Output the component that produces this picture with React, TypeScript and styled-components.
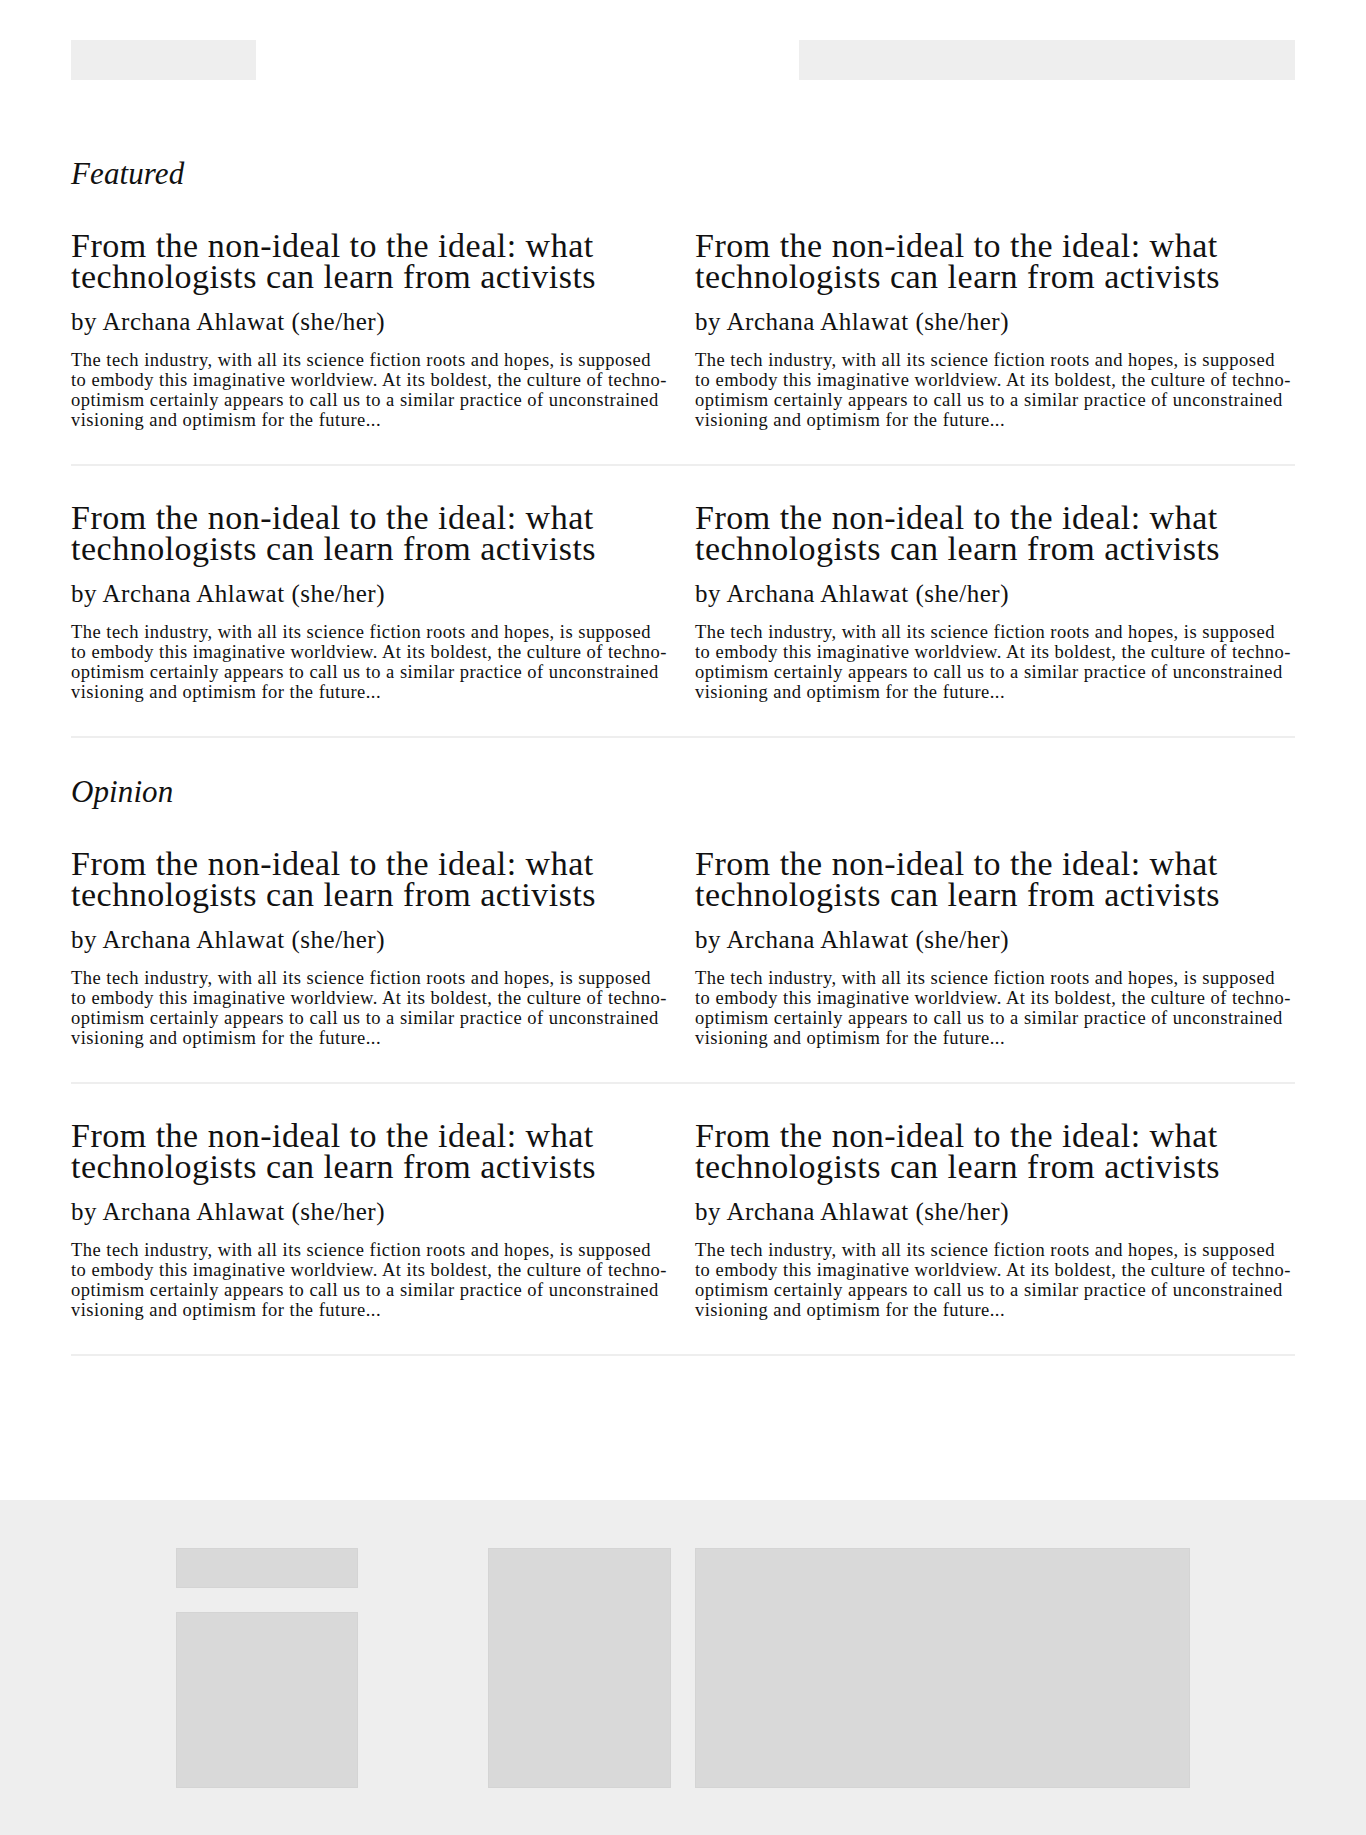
import React from "react";
import styled, { createGlobalStyle } from "styled-components";

const GlobalStyle = createGlobalStyle`
  html, body {
    margin: 0;
    padding: 0;
    background: #ffffff;
  }
  body {
    font-family: "Liberation Serif", "Times New Roman", serif;
    color: #111111;
    -webkit-font-smoothing: antialiased;
  }
  * { box-sizing: border-box; }
`;

const Page = styled.div`
  min-height: 1835px;
  display: flex;
  flex-direction: column;
`;

const Container = styled.div`
  width: 1224px;
  margin: 0 0 0 71px;
`;

const Header = styled.header`
  display: flex;
  justify-content: space-between;
  align-items: center;
  padding-top: 40px;
  height: 80px;
`;

const Placeholder = styled.div<{ $w: number; $h: number }>`
  width: ${(p) => p.$w}px;
  height: ${(p) => p.$h}px;
  background: #eeeeee;
`;

const Main = styled.main`
  padding-top: 40px;
  padding-bottom: 144px;
`;

const Section = styled.section``;

const SectionTitle = styled.h2`
  margin: 0;
  padding-top: 36px;
  font-style: italic;
  font-weight: 400;
  font-size: 31px;
  line-height: 36px;
  letter-spacing: 0.1px;
`;

const Row = styled.div<{ $first?: boolean }>`
  display: grid;
  grid-template-columns: 600px 600px;
  column-gap: 24px;
  padding-top: ${(p) => (p.$first ? "38px" : "36px")};
  padding-bottom: 34px;
  border-bottom: 2px solid #eeeeee;
`;

const Article = styled.article`
  display: flex;
  flex-direction: column;
`;

const Title = styled.h3`
  margin: 0;
  font-weight: 400;
  font-size: 34px;
  line-height: 31px;
  letter-spacing: 0.5px;
`;

const Byline = styled.p`
  margin: 16px 0 0;
  font-size: 25px;
  line-height: 28px;
  letter-spacing: 0.53px;
`;

const Excerpt = styled.p`
  margin: 14px 0 0;
  font-size: 18.5px;
  line-height: 20px;
  letter-spacing: 0.48px;
  white-space: pre;
`;

const Footer = styled.footer`
  background: #eeeeee;
  padding: 48px 0 47px;
`;

const FooterGrid = styled.div`
  display: grid;
  grid-template-columns: 600px 600px;
  column-gap: 24px;
`;

const FooterLeft = styled.div`
  display: flex;
  justify-content: space-between;
  padding-left: 105px;
`;

const FooterStack = styled.div`
  display: flex;
  flex-direction: column;
  gap: 24px;
`;

const Block = styled.div<{ $w: number; $h: number }>`
  width: ${(p) => p.$w}px;
  height: ${(p) => p.$h}px;
  background: #d9d9d9;
  border: 1px solid #d4d4d4;
`;

const excerpt =
  "The tech industry, with all its science fiction roots and hopes, is supposed\n" +
  "to embody this imaginative worldview. At its boldest, the culture of techno-\n" +
  "optimism certainly appears to call us to a similar practice of unconstrained\n" +
  "visioning and optimism for the future...";

type Post = { title: string; author: string; excerpt: string };

const post: Post = {
  title: "From the non-ideal to the ideal: what technologists can learn from activists",
  author: "by Archana Ahlawat (she/her)",
  excerpt,
};

const sections = [
  { name: "Featured", rows: [[post, post], [post, post]] },
  { name: "Opinion", rows: [[post, post], [post, post]] },
];

function ArticleCard({ p }: { p: Post }) {
  return (
    <Article>
      <Title>{p.title}</Title>
      <Byline>{p.author}</Byline>
      <Excerpt>{p.excerpt}</Excerpt>
    </Article>
  );
}

export default function App() {
  return (
    <Page>
      <GlobalStyle />
      <Container>
        <Header>
          <Placeholder $w={185} $h={40} />
          <Placeholder $w={496} $h={40} />
        </Header>
        <Main>
          {sections.map((s) => (
            <Section key={s.name}>
              <SectionTitle>{s.name}</SectionTitle>
              {s.rows.map((r, i) => (
                <Row key={i} $first={i === 0}>
                  {r.map((p, j) => (
                    <ArticleCard key={j} p={p} />
                  ))}
                </Row>
              ))}
            </Section>
          ))}
        </Main>
      </Container>
      <Footer>
        <Container>
          <FooterGrid>
            <FooterLeft>
              <FooterStack>
                <Block $w={182} $h={40} />
                <Block $w={182} $h={176} />
              </FooterStack>
              <Block $w={183} $h={240} />
            </FooterLeft>
            <div>
              <Block $w={495} $h={240} />
            </div>
          </FooterGrid>
        </Container>
      </Footer>
    </Page>
  );
}
